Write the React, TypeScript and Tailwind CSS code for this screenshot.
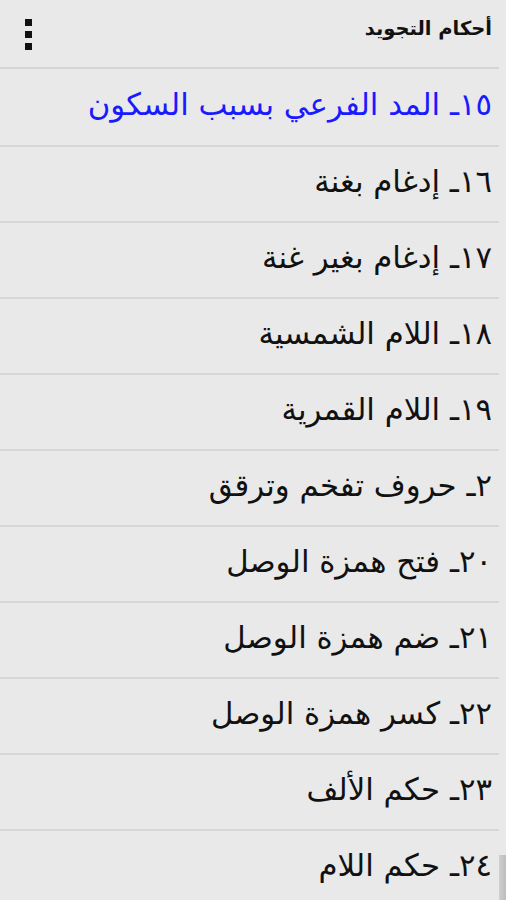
import React from "react";

const items = [
  "١٥ـ المد الفرعي بسبب السكون",
  "١٦ـ إدغام بغنة",
  "١٧ـ إدغام بغير غنة",
  "١٨ـ اللام الشمسية",
  "١٩ـ اللام القمرية",
  "٢ـ حروف تفخم وترقق",
  "٢٠ـ فتح همزة الوصل",
  "٢١ـ ضم همزة الوصل",
  "٢٢ـ كسر همزة الوصل",
  "٢٣ـ حكم الألف",
  "٢٤ـ حكم اللام",
];

export default function App() {
  return (
    <div
      className="relative w-[506px] h-[900px] overflow-hidden bg-[#e9e9e9]"
      style={{ fontFamily: '"DejaVu Sans", "Noto Sans", sans-serif' }}
    >
      <div className="flex h-[67px] items-center justify-between pl-[25px] pr-[14px]">
        <div className="flex flex-col gap-[5px] pt-[1px]">
          <div className="h-[7px] w-[7px] bg-[#111]" />
          <div className="h-[7px] w-[7px] bg-[#111]" />
          <div className="h-[7px] w-[7px] bg-[#111]" />
        </div>
        <div dir="rtl" className="text-[19.5px] font-bold text-[#111] pb-[10px]">
          أحكام التجويد
        </div>
      </div>
      <div className="h-[2px] w-[499px] bg-[#d4d4d4]" />
      {items.map((t, i) => (
        <div key={i}>
          <div
            dir="rtl"
            className={`flex items-center pr-[14px] pb-[6px] text-[30.8px] leading-none ${
              i === 0 ? "h-[76px] text-[#1a1aff]" : "h-[74px] text-[#111]"
            }`}
          >
            {t}
          </div>
          <div className="h-[2px] w-[499px] bg-[#d6d6d6]" />
        </div>
      ))}
      <div className="absolute right-0 top-[855px] h-[45px] w-[7px] bg-gradient-to-r from-[#cfcfcf] to-[#bdbdbd]" />
    </div>
  );
}
